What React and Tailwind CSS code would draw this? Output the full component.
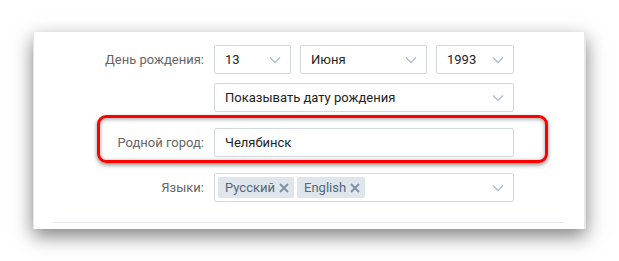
import React from 'react';

const Chevron = () => (
  <svg width="12" height="8" viewBox="0 0 12 8" className="shrink-0">
    <path d="M1 1.5 L6 6.5 L11 1.5" fill="none" stroke="#b3bcc6" strokeWidth="1.3" />
  </svg>
);

const Select = ({ value, className = '' }) => (
  <div className={`h-[29px] flex items-center justify-between pl-[10px] pr-[9px] border border-[#d3d9de] rounded-[2px] bg-white text-[13px] text-[#222] ${className}`}>
    <span>{value}</span>
    <Chevron />
  </div>
);

const Tag = ({ label }) => (
  <div className="h-[21px] flex items-center gap-[4px] pl-[7px] pr-[5px] bg-[#dee5eb] rounded-[2px] text-[13px] text-[#55677d]">
    <span>{label}</span>
    <svg width="10" height="10" viewBox="0 0 10 10">
      <path d="M1 1 L9 9 M9 1 L1 9" stroke="#7d8fa3" strokeWidth="1.8" />
    </svg>
  </div>
);

const Label = ({ children }) => (
  <div className="w-[180px] shrink-0 text-right pr-[10px] text-[13px] text-[#656565]">{children}</div>
);

export default function App() {
  return (
    <div className="w-[619px] h-[261px] bg-white overflow-hidden pt-[32px] pl-[33px]" style={{ fontFamily: 'Roboto, "Liberation Sans", sans-serif' }}>
      <div className="relative w-[553px] h-[197px] bg-white border-l border-l-[#e4e4e4] border-r-[2px] border-r-[#e7e8ec] shadow-[0_7px_18px_rgba(0,0,0,0.5)] pt-[13px]">
        {/* Birthday */}
        <div className="flex items-center">
          <Label>День рождения:</Label>
          <div className="flex gap-[9px]">
            <Select value="13" className="w-[77px]" />
            <Select value="Июня" className="w-[127px]" />
            <Select value="1993" className="w-[78px]" />
          </div>
        </div>
        <div className="flex items-center mt-[9px]">
          <Label></Label>
          <Select value="Показывать дату рождения" className="w-[300px]" />
        </div>

        {/* Hometown */}
        <div className="flex items-center mt-[16px]">
          <Label>Родной город:</Label>
          <div className="w-[300px] h-[29px] flex items-center pl-[10px] border border-[#d3d9de] rounded-[2px] text-[13px] text-[#222]">
            Челябинск
          </div>
        </div>

        {/* Languages */}
        <div className="flex items-center mt-[16px]">
          <Label>Языки:</Label>
          <div className="w-[300px] h-[29px] flex items-center justify-between pl-[3px] pr-[9px] border border-[#d3d9de] rounded-[2px]">
            <div className="flex gap-[3px]">
              <Tag label="Русский" />
              <Tag label="English" />
            </div>
            <Chevron />
          </div>
        </div>

        <div className="ml-[19px] mr-[19px] mt-[20px] border-t border-[#e7e8ec]" />

        {/* Highlight annotation */}
        <div className="absolute left-[63px] top-[83px] w-[451px] h-[48px] rounded-[9px] border-[3px] border-[#ff0000] shadow-[0_2px_4px_rgba(0,0,0,0.45),inset_0_1px_4px_rgba(0,0,0,0.4)]" />
      </div>
    </div>
  );
}
